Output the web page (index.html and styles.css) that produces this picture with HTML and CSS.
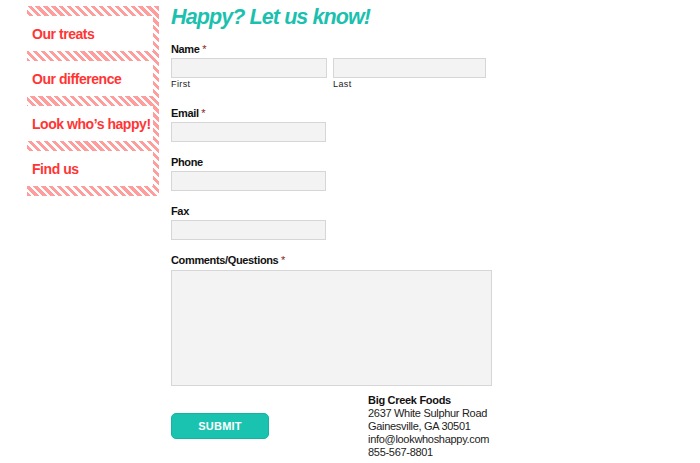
FILE: index.html
```html
<!DOCTYPE html>
<html>
<head>
<meta charset="utf-8">
<link rel="stylesheet" href="styles.css">
</head>
<body>
<div class="page">
  <nav class="sidebar">
    <a class="nav-item">Our treats</a>
    <a class="nav-item">Our difference</a>
    <a class="nav-item">Look who’s happy!</a>
    <a class="nav-item">Find us</a>
  </nav>
  <main class="main">
    <h1 class="title">Happy? Let us know!</h1>
    <form class="form">
      <div class="field field-name">
        <label class="label">Name <span class="req">*</span></label>
        <div class="name-row">
          <div class="name-part">
            <input class="input input-first" type="text">
            <span class="sublabel">First</span>
          </div>
          <div class="name-part">
            <input class="input input-last" type="text">
            <span class="sublabel">Last</span>
          </div>
        </div>
      </div>
      <div class="field">
        <label class="label">Email <span class="req">*</span></label>
        <input class="input" type="text">
      </div>
      <div class="field">
        <label class="label">Phone</label>
        <input class="input" type="text">
      </div>
      <div class="field">
        <label class="label">Fax</label>
        <input class="input" type="text">
      </div>
      <div class="field field-comments">
        <label class="label">Comments/Questions <span class="req">*</span></label>
        <textarea class="textarea"></textarea>
      </div>
      <div class="footer-row">
        <div class="submit-col">
          <button class="submit" type="button">SUBMIT</button>
        </div>
        <address class="address">
          <strong>Big Creek Foods</strong><br>
          2637 White Sulphur Road<br>
          Gainesville, GA 30501<br>
          info@lookwhoshappy.com<br>
          855-567-8801
        </address>
      </div>
    </form>
  </main>
</div>
</body>
</html>
```

FILE: styles.css
```css
* { box-sizing: border-box; }
html, body { margin: 0; padding: 0; background: #fff; }
body { font-family: "Liberation Sans", Arial, sans-serif; color: #111; }

.page {
  display: flex;
  align-items: flex-start;
  padding: 6px 0 0 27px;
  gap: 12px;
}

.sidebar {
  width: 132px;
  display: flex;
  flex-direction: column;
  gap: 10px;
  padding: 10px 6px 10px 0;
  background: repeating-linear-gradient(45deg, #ff9c9c 0 3px, #ffffff 3px 5.6px);
}

.nav-item {
  display: flex;
  align-items: center;
  height: 35px;
  padding-left: 5px;
  background: #fff;
  color: #ff3535;
  font-weight: bold;
  font-size: 14px;
  letter-spacing: -0.45px;
  white-space: nowrap;
  text-decoration: none;
}

.main {
  width: 340px;
  margin-top: -3px;
}

.title {
  margin: 0;
  font-size: 21.5px;
  line-height: 28px;
  font-style: italic;
  font-weight: bold;
  letter-spacing: -0.9px;
  color: #1bc1ae;
}

.form { margin-top: 11px; }

.field { display: flex; flex-direction: column; align-items: flex-start; margin-bottom: 13px; }
.field-name { margin-bottom: 16px; }

.label {
  font-size: 11px;
  line-height: 14px;
  font-weight: bold;
  letter-spacing: -0.35px;
  color: #111;
  margin-bottom: 2px;
}
.req { color: #8b1a1a; font-weight: normal; }

.input {
  width: 155px;
  height: 20px;
  border: 1px solid #d6d6d6;
  background: #f3f3f3;
  margin: 0;
  padding: 0 4px;
}

.name-row { display: flex; gap: 6px; }
.name-part { display: flex; flex-direction: column; }
.input-first { width: 156px; }
.input-last { width: 153px; }
.sublabel {
  font-size: 9px;
  line-height: 11px;
  letter-spacing: 0.4px;
  color: #222;
  margin-top: 1px;
}

.field-comments { margin-bottom: 8px; }
.field-comments .label { margin-bottom: 3px; }
.textarea {
  width: 321px;
  height: 116px;
  border: 1px solid #d6d6d6;
  background: #f3f3f3;
  margin: 0;
  resize: none;
  display: block;
}

.footer-row { display: flex; align-items: flex-start; }
.submit-col { width: 197px; padding-top: 19px; }
.submit {
  width: 98px;
  height: 26px;
  border: 1px solid #16b3a2;
  border-radius: 5px;
  background: #19c3b0;
  color: #fff;
  font-family: "Liberation Sans", Arial, sans-serif;
  font-size: 11px;
  font-weight: bold;
  letter-spacing: 0.2px;
  padding: 0;
  cursor: pointer;
}

.address {
  font-style: normal;
  font-size: 11px;
  line-height: 13px;
  letter-spacing: -0.3px;
  color: #222;
}
.address strong { color: #111; }
```
